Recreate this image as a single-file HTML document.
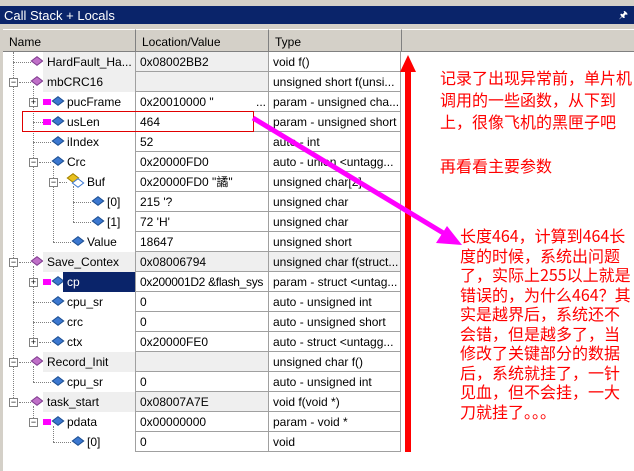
<!DOCTYPE html>
<html><head><meta charset="utf-8"><style>
*{margin:0;padding:0;box-sizing:border-box}
body{width:634px;height:471px;position:relative;overflow:hidden;background:#fff;font-family:"Liberation Sans","DejaVu Sans",sans-serif;font-size:12px;color:#000}
.top{position:absolute;left:0;top:0;width:634px;height:6px;background:#d4d0c8}
.title{position:absolute;left:0;top:6px;width:634px;height:18px;background:#0a246a;color:#fff;font-size:13px;padding:2px 4px}
.frame{position:absolute;left:0;top:24px;width:634px;height:447px;background:#d4d0c8}
.list{position:absolute;left:3px;top:29px;width:631px;height:442px;background:#fff}
.hdr{position:absolute;top:29px;height:23px;background:#d4d0c8;border-right:1px solid #808080;border-bottom:1px solid #808080;border-top:1px solid #fff;padding:5px 6px;font-size:12px}
.row{position:absolute;left:3px;width:398px;height:20px}
.c{position:absolute;top:0;height:20px;padding:3px 4px;white-space:nowrap;overflow:hidden;border-bottom:1px solid #a0a0a0;line-height:14px}
.c1{left:0;width:132px;border-bottom:none}
.c2{left:132px;width:133px;border-left:1px solid #a0a0a0}
.c3{left:265px;width:133px;border-left:1px solid #a0a0a0;border-right:1px solid #a0a0a0}
.fn{background:#efefef}
.ic{position:absolute;width:8px;height:8px;transform:rotate(45deg) skew(-8deg,-8deg);top:5px}
.f{background:#c070c8;border:1px solid #804090}
.v{background:#3c78d0;border:1px solid #205090}
.exp{position:absolute;width:9px;height:9px;border:1px solid #808080;background:#fff;font-size:9px;line-height:7px;text-align:center;top:6px}
.dl{position:absolute;border-left:1px dotted #808080}
.dh{position:absolute;border-top:1px dotted #808080}
.pa{position:absolute;width:8px;height:6px;background:#ff00ff;top:7px}
.red{color:#f00;font-family:"WenQuanYi Zen Hei","Noto Sans CJK SC",sans-serif;font-size:16px;position:absolute;white-space:nowrap}
</style></head><body>
<div class="top"></div>
<div class="title">Call Stack + Locals<span style="position:absolute;right:6px;top:2px;font-size:10px">&#x1F588;</span></div>
<div class="frame"></div>
<div class="list"></div>
<div class="hdr" style="left:3px;width:133px">Name</div>
<div class="hdr" style="left:136px;width:133px">Location/Value</div>
<div class="hdr" style="left:269px;width:133px">Type</div>
<div class="hdr" style="left:402px;width:232px;border-right:none"></div>

<div class="dl" style="left:13px;top:52px;height:350px"></div>
<div class="dl" style="left:33px;top:86px;height:170px"></div>
<div class="dl" style="left:53px;top:166px;height:76px"></div>
<div class="dl" style="left:73px;top:186px;height:36px"></div>
<div class="dl" style="left:33px;top:266px;height:76px"></div>
<div class="dl" style="left:33px;top:366px;height:16px"></div>
<div class="dl" style="left:33px;top:406px;height:16px"></div>
<div class="dl" style="left:53px;top:426px;height:16px"></div>

<div class="row" style="top:52px"><div class="dh" style="left:10px;top:10px;width:18px"></div><div class="ic f" style="left:30px"></div><div class="c c1 fn" style="left:40px;width:92px">HardFault_Ha...</div><div class="c c2 fn">0x08002BB2</div><div class="c c3">void f()</div></div>
<div class="row" style="top:72px"><div class="exp" style="left:6px">−</div><div class="dh" style="left:16px;top:10px;width:12px"></div><div class="ic f" style="left:30px"></div><div class="c c1 fn" style="left:40px;width:92px">mbCRC16</div><div class="c c2 fn"></div><div class="c c3">unsigned short f(unsi...</div></div>
<div class="row" style="top:92px"><div class="exp" style="left:26px">+</div><div class="pa" style="left:40px"></div><div class="ic v" style="left:51px"></div><div class="c c1" style="left:60px;width:72px">pucFrame</div><div class="c c2">0x20010000 "<span style="position:absolute;left:120px">...</span></div><div class="c c3">param - unsigned cha...</div></div>
<div class="row" style="top:112px"><div class="dh" style="left:30px;top:10px;width:12px"></div><div class="pa" style="left:40px"></div><div class="ic v" style="left:51px"></div><div class="c c1" style="left:60px;width:72px">usLen</div><div class="c c2">464</div><div class="c c3">param - unsigned short</div></div>
<div class="row" style="top:132px"><div class="dh" style="left:30px;top:10px;width:18px"></div><div class="ic v" style="left:51px"></div><div class="c c1" style="left:60px;width:72px">iIndex</div><div class="c c2">52</div><div class="c c3">auto - int</div></div>
<div class="row" style="top:152px"><div class="exp" style="left:26px">−</div><div class="dh" style="left:36px;top:10px;width:12px"></div><div class="ic v" style="left:51px"></div><div class="c c1" style="left:60px;width:72px">Crc</div><div class="c c2">0x20000FD0</div><div class="c c3">auto - union &lt;untagg...</div></div>
<div class="row" style="top:172px"><div class="exp" style="left:46px">−</div><div class="dh" style="left:56px;top:10px;width:8px"></div><div class="ic" style="left:66px;top:2px;background:#e8c020;border:1px solid #a08000"></div><div class="ic" style="left:71px;top:7px;background:#fff;border:1px solid #3c78d0"></div><div class="c c1" style="left:80px;width:52px">Buf</div><div class="c c2">0x20000FD0 "<span style="font-family:'WenQuanYi Zen Hei',sans-serif;line-height:12px">譎</span>"</div><div class="c c3">unsigned char[2]</div></div>
<div class="row" style="top:192px"><div class="dh" style="left:70px;top:10px;width:18px"></div><div class="ic v" style="left:91px"></div><div class="c c1" style="left:100px;width:32px">[0]</div><div class="c c2">215 '?</div><div class="c c3">unsigned char</div></div>
<div class="row" style="top:212px"><div class="dh" style="left:70px;top:10px;width:18px"></div><div class="ic v" style="left:91px"></div><div class="c c1" style="left:100px;width:32px">[1]</div><div class="c c2">72 'H'</div><div class="c c3">unsigned char</div></div>
<div class="row" style="top:232px"><div class="dh" style="left:50px;top:10px;width:18px"></div><div class="ic v" style="left:71px"></div><div class="c c1" style="left:80px;width:52px">Value</div><div class="c c2">18647</div><div class="c c3">unsigned short</div></div>
<div class="row" style="top:252px"><div class="exp" style="left:6px">−</div><div class="dh" style="left:16px;top:10px;width:12px"></div><div class="ic f" style="left:30px"></div><div class="c c1 fn" style="left:40px;width:92px">Save_Contex</div><div class="c c2 fn">0x08006794</div><div class="c c3 fn">unsigned char f(struct...</div></div>
<div class="row" style="top:272px"><div class="exp" style="left:26px">+</div><div class="pa" style="left:40px"></div><div class="ic v" style="left:51px"></div><div class="c c1" style="left:60px;width:72px;background:#0a246a;color:#fff">cp</div><div class="c c2" style="letter-spacing:-0.3px">0x200001D2 &amp;flash_sys</div><div class="c c3">param - struct &lt;untag...</div></div>
<div class="row" style="top:292px"><div class="dh" style="left:30px;top:10px;width:18px"></div><div class="ic v" style="left:51px"></div><div class="c c1" style="left:60px;width:72px">cpu_sr</div><div class="c c2">0</div><div class="c c3">auto - unsigned int</div></div>
<div class="row" style="top:312px"><div class="dh" style="left:30px;top:10px;width:18px"></div><div class="ic v" style="left:51px"></div><div class="c c1" style="left:60px;width:72px">crc</div><div class="c c2">0</div><div class="c c3">auto - unsigned short</div></div>
<div class="row" style="top:332px"><div class="exp" style="left:26px">+</div><div class="dh" style="left:36px;top:10px;width:12px"></div><div class="ic v" style="left:51px"></div><div class="c c1" style="left:60px;width:72px">ctx</div><div class="c c2">0x20000FE0</div><div class="c c3">auto - struct &lt;untagg...</div></div>
<div class="row" style="top:352px"><div class="exp" style="left:6px">−</div><div class="dh" style="left:16px;top:10px;width:12px"></div><div class="ic f" style="left:30px"></div><div class="c c1 fn" style="left:40px;width:92px">Record_Init</div><div class="c c2 fn"></div><div class="c c3">unsigned char f()</div></div>
<div class="row" style="top:372px"><div class="dh" style="left:30px;top:10px;width:18px"></div><div class="ic v" style="left:51px"></div><div class="c c1" style="left:60px;width:72px">cpu_sr</div><div class="c c2">0</div><div class="c c3">auto - unsigned int</div></div>
<div class="row" style="top:392px"><div class="exp" style="left:6px">−</div><div class="dh" style="left:16px;top:10px;width:12px"></div><div class="ic f" style="left:30px"></div><div class="c c1 fn" style="left:40px;width:92px">task_start</div><div class="c c2 fn">0x08007A7E</div><div class="c c3">void f(void *)</div></div>
<div class="row" style="top:412px"><div class="exp" style="left:26px">−</div><div class="pa" style="left:40px"></div><div class="ic v" style="left:51px"></div><div class="c c1" style="left:60px;width:72px">pdata</div><div class="c c2">0x00000000</div><div class="c c3">param - void *</div></div>
<div class="row" style="top:432px"><div class="dh" style="left:50px;top:10px;width:18px"></div><div class="ic v" style="left:71px"></div><div class="c c1" style="left:80px;width:52px">[0]</div><div class="c c2">0</div><div class="c c3">void</div></div>

<div style="position:absolute;left:22px;top:111px;width:232px;height:21px;border:1px solid #e00000"></div>

<svg style="position:absolute;left:0;top:0" width="634" height="471">
<polygon points="408,55 400,72 405,72 405,452 411,452 411,72 416,72" fill="#f00"/>
<line x1="253" y1="118" x2="445" y2="234" stroke="#ff00ff" stroke-width="5"/>
<polygon points="462,245 436,243 447,226" fill="#ff00ff"/>
</svg>

<div class="red" style="left:440px;top:66px;line-height:22px">记录了出现异常前，单片机<br>调用的一些函数，从下到<br>上，很像飞机的黑匣子吧<br><br>再看看主要参数</div>
<div class="red" style="left:460px;top:226px;line-height:19.5px">长度464，计算到464长<br>度的时候，系统出问题<br>了，实际上255以上就是<br>错误的，为什么464？其<br>实是越界后，系统还不<br>会错，但是越多了，当<br>修改了关键部分的数据<br>后，系统就挂了，一针<br>见血，但不会挂，一大<br>刀就挂了。。。</div>
</body></html>
